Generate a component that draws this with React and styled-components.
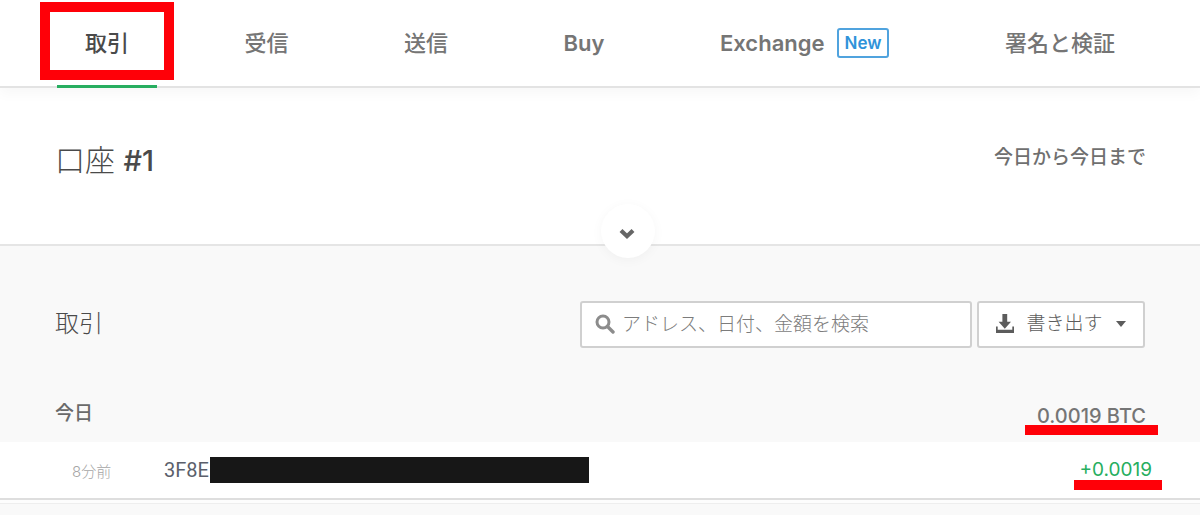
import React from "react";
import styled, { createGlobalStyle } from "styled-components";

const GlobalStyle = createGlobalStyle`
  *, *::before, *::after { box-sizing: border-box; }
  body {
    margin: 0;
    background: #f9f9f9;
    color: #4a4a4a;
    font-family: Inter, "Noto Sans CJK JP", sans-serif;
  }
`;

const NavBar = styled.nav`
  position: relative;
  z-index: 1;
  display: flex;
  justify-content: space-between;
  height: 88px;
  padding: 0 57px;
  background: #fff;
  border-bottom: 2px solid #e3e3e3;
  box-shadow: 0 6px 12px rgba(0, 0, 0, 0.03);
`;

const Tab = styled.a`
  position: relative;
  display: flex;
  align-items: center;
  gap: 12px;
  padding: 0 28px;
  margin-bottom: -2px;
  color: ${(p) => (p.$active ? "#4a4a4a" : "#757575")};
  border-bottom: 3px solid ${(p) => (p.$active ? "#27ae60" : "transparent")};
  font-size: 22px;
  font-weight: ${(p) => (p.$latin ? 600 : 500)};
  line-height: 32px;
  white-space: nowrap;
  text-decoration: none;
`;

const NewBadge = styled.span`
  padding: 0 6px;
  border: 2px solid #50a3de;
  border-radius: 3px;
  color: #2f93da;
  font-size: 17px;
  line-height: 26px;
`;

const Highlight = styled.span`
  position: absolute;
  top: 2px;
  right: -17px;
  bottom: 5px;
  left: -17px;
  border: 10px solid #ff0008;
`;

const AccountPanel = styled.section`
  position: relative;
  display: flex;
  justify-content: space-between;
  align-items: flex-start;
  height: 158px;
  padding: 48px 54px 0 55px;
  background: #fff;
  border-bottom: 2px solid #e5e5e5;
`;

const AccountName = styled.h1`
  margin: 0;
  font-size: 30px;
  font-weight: 300;
  line-height: 48px;
`;

const AccountNumber = styled.span`
  font-size: 29px;
  font-weight: 500;
`;

const DateRange = styled.p`
  margin: 0;
  color: #6f6f6f;
  font-size: 19px;
  font-weight: 500;
  line-height: 44px;
`;

const ExpandButton = styled.button`
  position: absolute;
  bottom: -14px;
  left: calc(50% + 1px);
  display: flex;
  align-items: center;
  justify-content: center;
  width: 54px;
  height: 54px;
  padding: 6px 2px 0 0;
  border: 0;
  border-radius: 50%;
  background: #fff;
  color: #666;
  box-shadow: 0 2px 12px rgba(0, 0, 0, 0.04);
`;

const Toolbar = styled.header`
  display: flex;
  align-items: center;
  gap: 5px;
  padding: 54px 55px 0;
`;

const SectionTitle = styled.h2`
  flex: 1;
  margin: 0;
  font-size: 24px;
  font-weight: 300;
  line-height: 48px;
`;

const SearchBox = styled.label`
  display: flex;
  align-items: center;
  gap: 7px;
  width: 392px;
  height: 47px;
  padding: 0 13px;
  border: 2px solid #d0d0d0;
  border-radius: 3px;
  background: #fff;
  color: #8c8c8c;
`;

const SearchInput = styled.input`
  flex: 1;
  min-width: 0;
  padding: 2px 0 0;
  border: 0;
  outline: 0;
  background: transparent;
  color: #4a4a4a;
  font: 300 19px/28px Inter, "Noto Sans CJK JP", sans-serif;
  &::placeholder { color: #7c7c7c; opacity: 1; }
`;

const ExportButton = styled.button`
  display: flex;
  align-items: center;
  justify-content: space-between;
  width: 168px;
  height: 47px;
  padding: 0 15px 0 16px;
  border: 2px solid #d0d0d0;
  border-radius: 3px;
  background: #fff;
  color: #5c5c5c;
  font: 300 19px/28px Inter, "Noto Sans CJK JP", sans-serif;
`;

const DayHeader = styled.div`
  display: flex;
  justify-content: space-between;
  align-items: flex-start;
  height: 94px;
  padding: 52px 54px 0 55px;
`;

const DayTitle = styled.h3`
  margin: 0;
  color: #6a6a6a;
  font-size: 19px;
  font-weight: 500;
  line-height: 28px;
`;

const Amount = styled.span`
  position: relative;
  color: ${(p) => (p.$credit ? "#27ae60" : "#757575")};
  font-size: ${(p) => (p.$credit ? 19 : 20)}px;
  font-weight: ${(p) => (p.$credit ? 400 : 500)};
  line-height: 32px;
`;

const Marker = styled.span`
  position: absolute;
  top: ${(p) => p.$top}px;
  right: ${(p) => p.$right}px;
  left: ${(p) => p.$left}px;
  height: 10px;
  background: #ff0008;
`;

const Transactions = styled.table`
  width: 100%;
  border-collapse: collapse;
  background: #fff;
  border-bottom: 2px solid #dedede;
`;

const Cell = styled.td`
  height: 57px;
  padding: 0 ${(p) => (p.$end ? 48 : 0)}px 0 ${(p) => p.$start || 0}px;
  width: ${(p) => (p.$width ? p.$width + "px" : "auto")};
  text-align: ${(p) => (p.$end ? "right" : "left")};
`;

const Time = styled.time`
  color: #a6a6a6;
  font-size: 15px;
  font-weight: 300;
`;

const Address = styled.span`
  display: flex;
  align-items: center;
  gap: 1px;
  color: #5b5f6b;
  font-family: Roboto, sans-serif;
  font-size: 20px;
`;

const Redaction = styled.span`
  width: 379px;
  height: 26px;
  background: #171717;
`;

const ListEnd = styled.div`
  height: 4px;
  background: #fdfdfd;
  border-bottom: 1px solid #eee;
`;

function SearchIcon() {
  return (
    <svg width="20" height="20" viewBox="0 0 20 20" fill="none" stroke="currentColor" aria-hidden="true">
      <circle cx="8" cy="8" r="6" strokeWidth="3" />
      <path d="M12.5 12.5 18 18" strokeWidth="3.4" strokeLinecap="round" />
    </svg>
  );
}

function DownloadIcon() {
  return (
    <svg width="20" height="20" viewBox="0 0 20 20" fill="currentColor" aria-hidden="true">
      <path d="M7.4 0h4.8v7.8H16l-6.2 7L3.6 7.8h3.8z" />
      <path d="M1 12.5h1.7v3.2h14.6v-3.2H19V19H1z" />
    </svg>
  );
}

function ChevronIcon() {
  return (
    <svg width="16" height="12" viewBox="0 0 16 12" fill="none" stroke="currentColor" strokeWidth="4.2" aria-hidden="true">
      <path d="m2 2.5 6 5.7 6-5.7" />
    </svg>
  );
}

function CaretIcon() {
  return (
    <svg width="14" height="6" viewBox="0 0 14 6" fill="currentColor" aria-hidden="true">
      <path d="M2 0h10L7 6z" />
    </svg>
  );
}

export default function App() {
  return (
    <>
      <GlobalStyle />
      <NavBar>
        <Tab href="#transactions" $active aria-current="page">
          取引
          <Highlight />
        </Tab>
        <Tab href="#receive">受信</Tab>
        <Tab href="#send">送信</Tab>
        <Tab href="#buy" $latin>
          Buy
        </Tab>
        <Tab href="#exchange" $latin>
          Exchange <NewBadge>New</NewBadge>
        </Tab>
        <Tab href="#verify">署名と検証</Tab>
      </NavBar>
      <main>
        <AccountPanel>
          <AccountName>
            口座 <AccountNumber>#1</AccountNumber>
          </AccountName>
          <DateRange>今日から今日まで</DateRange>
          <ExpandButton type="button" aria-expanded="false" aria-label="口座の詳細">
            <ChevronIcon />
          </ExpandButton>
        </AccountPanel>
        <Toolbar>
          <SectionTitle>取引</SectionTitle>
          <SearchBox>
            <SearchIcon />
            <SearchInput type="text" aria-label="検索" placeholder="アドレス、日付、金額を検索" />
          </SearchBox>
          <ExportButton type="button">
            <DownloadIcon />
            書き出す
            <CaretIcon />
          </ExportButton>
        </Toolbar>
        <DayHeader>
          <DayTitle>今日</DayTitle>
          <Amount>
            0.0019 BTC
            <Marker $top={25} $left={-12} $right={-12} />
          </Amount>
        </DayHeader>
        <Transactions>
          <tbody>
            <tr>
              <Cell $start={72} $width={164}>
                <Time>8分前</Time>
              </Cell>
              <Cell>
                <Address>
                  3F8E
                  <Redaction />
                </Address>
              </Cell>
              <Cell $end>
                <Amount $credit>
                  +0.0019
                  <Marker $top={22} $left={-5} $right={-10} />
                </Amount>
              </Cell>
            </tr>
          </tbody>
        </Transactions>
        <ListEnd />
      </main>
    </>
  );
}
